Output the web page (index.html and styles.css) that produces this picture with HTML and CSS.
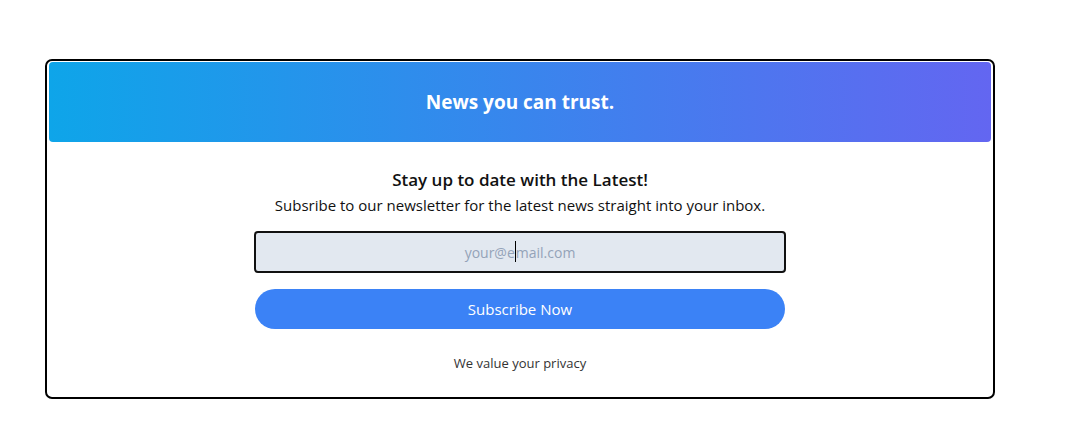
FILE: index.html
```html
<!DOCTYPE html>
<html lang="en">
<head>
<meta charset="utf-8">
<title>Newsletter</title>
<link rel="stylesheet" href="styles.css">
</head>
<body>
<div class="card">
  <div class="banner">News you can trust.</div>
  <div class="content">
    <h2 class="title">Stay up to date with the Latest!</h2>
    <p class="subtitle">Subsribe to our newsletter for the latest news straight into your inbox.</p>
    <div class="form">
      <div class="input"><span class="ph">your@e</span><span class="caret"></span><span class="ph">mail.com</span></div>
      <button class="btn">Subscribe Now</button>
    </div>
    <p class="privacy">We value your privacy</p>
  </div>
</div>
</body>
</html>
```
FILE: styles.css
```css
* { box-sizing: border-box; }
html, body { margin: 0; background: #fff; }
body {
  font-family: "Open Sans", "Noto Sans", sans-serif;
  color: #111;
}
.card {
  margin: 59px 0 0 45px;
  width: 950px;
  height: 340px;
  border: 2px solid #000;
  border-radius: 7px;
  padding: 1px 2px;
  display: flex;
  flex-direction: column;
}
.banner {
  height: 80px;
  border-radius: 4px;
  background: linear-gradient(to right, #0ea5e9, #6366f1);
  color: #fff;
  font-weight: 700;
  font-size: 19px;
  display: flex;
  align-items: center;
  justify-content: center;
}
.content {
  display: flex;
  flex-direction: column;
  align-items: center;
  padding-top: 26px;
}
.title {
  margin: 0;
  font-size: 17px;
  font-weight: 600;
  line-height: 24px;
}
.subtitle {
  margin: 2px 0 0;
  font-size: 15px;
  line-height: 22px;
}
.form {
  margin-top: 15px;
  width: 532px;
  display: flex;
  flex-direction: column;
  align-items: center;
  gap: 16px;
}
.input {
  width: 532px;
  height: 42px;
  background: #e2e8f0;
  border: 2px solid #111;
  border-radius: 4px;
  display: flex;
  align-items: center;
  justify-content: center;
  font-size: 14px;
  color: #94a3b8;
}
.caret {
  width: 1px;
  height: 21px;
  background: #000;
  margin-top: -2px;
}
.btn {
  width: 530px;
  height: 40px;
  border: none;
  border-radius: 20px;
  background: #3b82f6;
  color: #fff;
  font-family: inherit;
  font-size: 15px;
}
.privacy {
  margin: 25px 0 0;
  font-size: 13px;
  color: #333;
}
```
